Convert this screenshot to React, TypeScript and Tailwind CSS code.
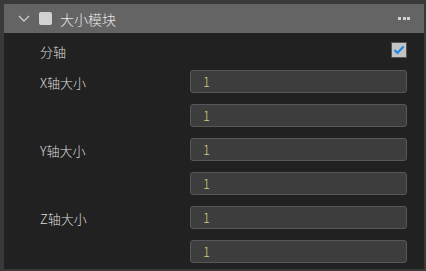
import React from "react";

const font = { fontFamily: '"Noto Sans CJK SC", "Noto Sans", sans-serif' };

function Input() {
  return (
    <div className="h-[23px] rounded-[3px] border border-[#575757] bg-[#3d3d3d] pl-[12px] flex items-center text-[13px] text-[#d3ca7e] leading-none font-light">
      1
    </div>
  );
}

function Group({ label }: { label: string }) {
  return (
    <>
      <div className="h-[23px] flex items-center text-[13px] text-[#dcdcdc] pt-[2px] font-light">{label}</div>
      <Input />
      <div />
      <Input />
    </>
  );
}

export default function App() {
  return (
    <div className="w-[426px] h-[271px] bg-[#393939] pl-[4px] pt-[4px] pr-[2px] pb-[2px]" style={font}>
      <div className="flex flex-col h-full bg-[#212121]">
        <div className="h-[29px] bg-[#646464] flex items-center shrink-0">
          <svg width="12" height="7" viewBox="0 0 12 7" className="ml-[14px]">
            <path d="M1 1 L6 6 L11 1" stroke="#c9c9c9" strokeWidth="1.4" fill="none" />
          </svg>
          <div className="ml-[9px] w-[13px] h-[13px] rounded-[2px] bg-[#d2d2d2]" />
          <div className="ml-[8px] text-[14px] text-[#e6e6e6] leading-none font-light">大小模块</div>
          <div className="ml-auto mr-[14px] flex gap-[1.5px]">
            <div className="w-[3px] h-[3px] bg-[#d0d0d0]" />
            <div className="w-[3px] h-[3px] bg-[#d0d0d0]" />
            <div className="w-[3px] h-[3px] bg-[#d0d0d0]" />
          </div>
        </div>
        <div className="pl-[36px] pr-[17px] pt-[9px]">
          <div className="h-[16px] flex items-center justify-between">
            <div className="text-[13px] text-[#dcdcdc] leading-none pt-[2px] font-light">分轴</div>
            <div className="w-[16px] h-[16px] border border-[#555] bg-[#c4c4c4] flex items-center justify-center">
              <svg width="12" height="10" viewBox="0 0 12 10">
                <path d="M1.5 5 L4.5 8 L10.5 1.5" stroke="#1e88e5" strokeWidth="2.2" fill="none" />
              </svg>
            </div>
          </div>
          <div className="mt-[12px] grid grid-cols-[150px_1fr] gap-y-[11px]">
            <Group label="X轴大小" />
            <Group label="Y轴大小" />
            <Group label="Z轴大小" />
          </div>
        </div>
      </div>
    </div>
  );
}
